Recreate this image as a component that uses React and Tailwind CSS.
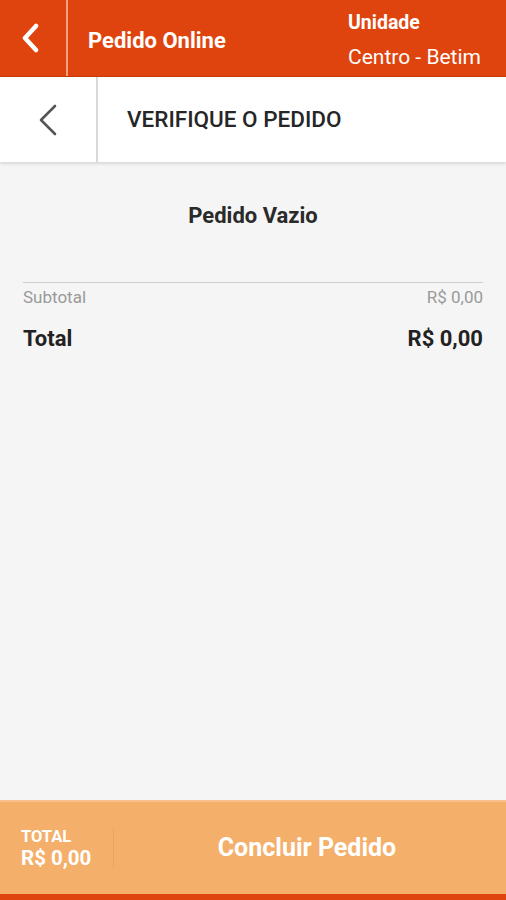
export default function App() {
  return (
    <div className="flex h-[900px] w-[506px] flex-col bg-[#f5f5f5] font-['Roboto','Liberation_Sans',sans-serif]">
      {/* Top app bar */}
      <div className="flex h-[77px] shrink-0 border-b border-[#c93a0a] bg-[#e0440e] text-white">
        <div className="flex w-[68px] items-center justify-center border-r-2 border-[#f2a07c]">
          <svg width="22" height="30" viewBox="0 0 22 30" className="ml-[-4px]">
            <path d="M16 3 L5 15 L16 27" fill="none" stroke="white" strokeWidth="4.5" strokeLinecap="round" strokeLinejoin="round" />
          </svg>
        </div>
        <div className="flex flex-1 items-center pl-[20px] pt-[4px] text-[22px] font-bold">Pedido Online</div>
        <div className="flex w-[158px] flex-col justify-center pt-[3px]">
          <span className="text-[19.5px] leading-[24px] font-bold">Unidade</span>
          <span className="mt-[10px] text-[21px] leading-[24px]">Centro - Betim</span>
        </div>
      </div>

      {/* Sub header */}
      <div className="flex h-[85px] shrink-0 bg-white shadow-[0_2px_3px_rgba(0,0,0,0.12)]">
        <div className="flex w-[98px] items-center justify-center border-r-2 border-[#d8d8d8]">
          <svg width="22" height="34" viewBox="0 0 22 34">
            <path d="M18 3 L4 17 L18 31" fill="none" stroke="#555555" strokeWidth="2.6" strokeLinecap="round" strokeLinejoin="round" />
          </svg>
        </div>
        <div className="flex items-center pl-[29px] pt-[1px] text-[22.5px] font-medium text-[#262626]">VERIFIQUE O PEDIDO</div>
      </div>

      {/* Content */}
      <div className="flex flex-1 flex-col px-[23px]">
        <div className="mt-[37px] text-center text-[22px] leading-[33px] font-bold text-[#2a2a2a]">Pedido Vazio</div>
        <div className="mt-[50px] border-t border-[#cfcfcf]" />
        <div className="mt-[2px] flex justify-between text-[17px] leading-[25px] text-[#9a9a9a]">
          <span>Subtotal</span>
          <span>R$ 0,00</span>
        </div>
        <div className="mt-[12px] flex justify-between text-[22px] leading-[33px] font-bold text-[#222]">
          <span>Total</span>
          <span>R$ 0,00</span>
        </div>
      </div>

      {/* Bottom bar */}
      <div className="flex h-[94px] shrink-0 items-center border-t-2 border-[#f7c08a] bg-[#f4b06b] text-white">
        <div className="flex w-[113px] flex-col pl-[21px] pt-[2px]">
          <span className="text-[16.5px] leading-[18px] font-bold">TOTAL</span>
          <span className="text-[20.5px] leading-[24px] font-bold">R$ 0,00</span>
        </div>
        <div className="h-[40px] w-px bg-[#eaa460]" />
        <div className="flex-1 pr-[6px] text-center text-[25px] font-bold">Concluir Pedido</div>
      </div>
      <div className="h-[6px] shrink-0 bg-[#e0440e]" />
    </div>
  );
}
